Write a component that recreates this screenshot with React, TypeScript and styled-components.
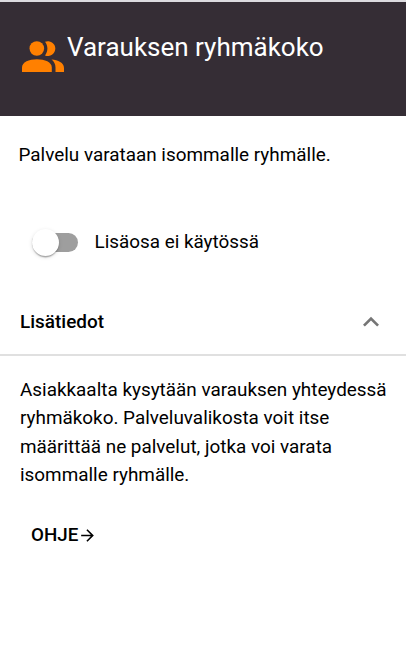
import React from "react";
import styled, { createGlobalStyle } from "styled-components";

const GlobalStyle = createGlobalStyle`
  * { box-sizing: border-box; }
  body { margin: 0; background: #fff; color: #000; font-family: Roboto, "Liberation Sans", sans-serif; }
`;
const Card = styled.main`
  display: flex;
  flex-direction: column;
  width: 406px;
  height: 652px;
  border-top: 2px solid #dcdbdf;
  overflow: hidden;
`;
const Header = styled.header`
  display: flex;
  height: 114px;
  padding: 29px 0 0 22px;
  background: #352d35;
  color: #fff;
`;
const GroupIcon = styled.svg`
  width: 42px;
  height: 31px;
  margin: 10px 3px 0 0;
  fill: #ff8000;
`;
const Title = styled.h1`
  margin: 0;
  font-size: 26px;
  line-height: 32px;
  font-weight: 400;
`;
const Summary = styled.p`
  margin: 25px 0 0 18.5px;
  font-size: 18.9px;
  line-height: 28px;
`;
const SwitchRow = styled.label`
  display: flex;
  align-items: center;
  gap: 16.5px;
  height: 40px;
  margin: 53px 0 0 32px;
  font-size: 18.88px;
`;
const SwitchText = styled.span`
  line-height: 28px;
`;
const Track = styled.span`
  display: flex;
  align-items: center;
  width: 46px;
  height: 19px;
  border-radius: 10px;
  background: #9e9e9e;
`;
const Thumb = styled.span`
  width: 27px;
  height: 27px;
  flex: none;
  border-radius: 50%;
  background: #fff;
  box-shadow: 0 2.7px 1.3px -1.3px rgba(0,0,0,.2), 0 1.3px 1.3px rgba(0,0,0,.14), 0 1.3px 4px rgba(0,0,0,.12);
`;
const DetailsHeader = styled.div`
  display: flex;
  align-items: center;
  justify-content: space-between;
  height: 68px;
  margin-top: 26px;
  padding: 1px 19px 0 20px;
  border-bottom: 2px solid #e0e0e0;
  font-size: 18.95px;
  font-weight: 500;
`;
const Chevron = styled.svg`
  width: 32px;
  height: 32px;
  fill: #757575;
`;
const Details = styled.p`
  margin: 19.8px 0 0 20px;
  font-size: 18.9px;
  line-height: 28.4px;
  white-space: nowrap;
`;
const HelpButton = styled.button`
  display: flex;
  align-items: center;
  align-self: flex-start;
  height: 40px;
  margin: 25.6px 0 0 31px;
  padding: 0;
  border: 0;
  background: none;
  color: #000;
  font: 500 18.8px Roboto, sans-serif;
`;
const Arrow = styled.svg`
  width: 19px;
  height: 19px;
  fill: currentColor;
`;

export default function App() {
  return (
    <Card>
      <GlobalStyle />
      <Header>
        <GroupIcon viewBox="0 0 42 31">
          <circle cx="14.8" cy="7.5" r="7.3" />
          <path d="M0 31v-4.500C0 21 7 18.200 14.900 18.200s14.900 2.800 14.900 8.300V31z" />
          <path d="M23 .8a7.400 7.400 0 1 1 0 13.600c3.200-4 3.200-9.600 0-13.600z" />
          <path d="M29.500 18.500C36 19 42 21.500 42 27v4h-8.500v-4.500c0-3.500-1.500-6-4-8z" />
        </GroupIcon>
        <Title>Varauksen ryhmäkoko</Title>
      </Header>
      <Summary>Palvelu varataan isommalle ryhmälle.</Summary>
      <SwitchRow><Track><Thumb /></Track><SwitchText>Lisäosa ei käytössä</SwitchText></SwitchRow>
      <DetailsHeader>
        Lisätiedot
        <Chevron viewBox="0 0 24 24"><path d="m12 8-6 6 1.41 1.41L12 10.83l4.59 4.58L18 14z" /></Chevron>
      </DetailsHeader>
      <Details>
        Asiakkaalta kysytään varauksen yhteydessä<br />
        ryhmäkoko. Palveluvalikosta voit itse<br />
        määrittää ne palvelut, jotka voi varata<br />
        isommalle ryhmälle.
      </Details>
      <HelpButton>
        OHJE
        <Arrow viewBox="0 0 24 24"><path d="m12 4-1.41 1.41L16.17 11H4v2h12.17l-5.58 5.59L12 20l8-8z" /></Arrow>
      </HelpButton>
    </Card>
  );
}
